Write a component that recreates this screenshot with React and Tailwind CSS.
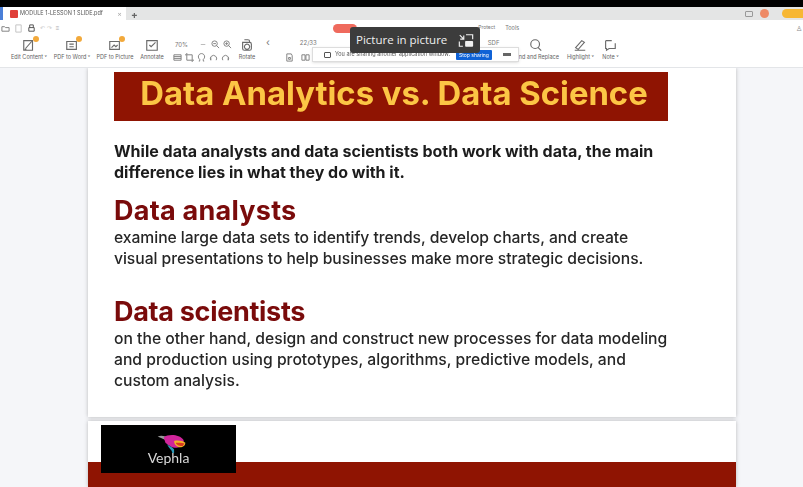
const F = { fontFamily: '"Inter","Liberation Sans",sans-serif' };

function Tool({ label, w, children }) {
  return (
    <div className="flex flex-col items-center gap-[1px] pt-[2px]" style={{ width: w }}>
      {children}
      <span className="text-[5.500px] leading-[8px] text-[#5f5f5f] whitespace-nowrap">{label}</span>
    </div>
  );
}

function Ic({ children, badge }) {
  return (
    <span className="relative block w-[14px] h-[14px]">
      <svg viewBox="0 0 16 16" className="w-[14px] h-[14px]" fill="none" stroke="#6a6a6a" strokeWidth="1.300">
        {children}
      </svg>
      {badge && <span className="absolute -top-[2px] -right-[3px] w-[6px] h-[6px] rounded-full bg-[#f2a93b]" />}
    </span>
  );
}

function Small({ d, c = "#858585" }) {
  return (
    <svg viewBox="0 0 10 10" className="w-[9px] h-[9px] shrink-0" fill="none" stroke={c} strokeWidth="1.100">
      <path d={d} />
    </svg>
  );
}

export default function App() {
  return (
    <div className="w-[803px] h-[487px] overflow-hidden relative bg-[#f5f6f9] flex flex-col" style={F}>
      <div className="h-[7px] bg-black shrink-0" />

      {/* tab bar */}
      <div className="h-[13px] bg-[#e4e5e5] shrink-0 flex items-center blur-[0.4px]">
        <div className="w-[3px] h-[13px] bg-[#4a7fd8]" />
        <div className="w-[123px] h-[13px] bg-white flex items-center pl-[7px] gap-[2px]">
          <span className="w-[8px] h-[8px] bg-[#e0403a] rounded-[1px]" />
          <span className="text-[5.500px] text-[#555] whitespace-nowrap">MODULE 1-LESSON 1 SLIDE.pdf</span>
          <span className="ml-auto mr-[4px] text-[7px] leading-none text-[#aaa]">×</span>
        </div>
        <span className="ml-[5px] text-[10px] leading-none text-[#666] font-bold">+</span>
        <div className="ml-auto flex items-center">
          <span className="w-[8px] h-[6px] border border-[#999] rounded-[1px] mr-[7px]" />
          <span className="w-[9px] h-[9px] rounded-full bg-[#ee8a66] mr-[13px]" />
          <span className="w-[21px] h-[9px] rounded-l-full bg-[#f7b733]" />
        </div>
      </div>

      {/* toolbar */}
      <div className="h-[47px] bg-white shrink-0 relative flex flex-col blur-[0.4px]">
        <div className="h-[16px] flex items-center pl-[1px] gap-[4px]">
          <Small d="M1 3h3l1 1h4v4H1z" />
          <Small d="M2 1h6v8H2z" c="#c4c4c4" />
          <Small d="M2 4h6v4H2zM3 4V1h4v3" c="#555555" />
          <span className="text-[6px] leading-none text-[#ccc]">↶ ↷</span>
          <span className="text-[6px] leading-none text-[#aaa]">≡</span>
          <div className="ml-[270px] mt-[1px] w-[24px] h-[9px] rounded-full bg-[#ef6a5d]" />
          <span className="ml-[117px] text-[5px] text-[#777]">Protect</span>
          <span className="ml-[6px] text-[5.500px] text-[#777]">Tools</span>
          <span className="ml-auto mr-[1px] text-[7px] leading-none text-[#888]">♙</span>
        </div>
        <div className="flex items-start pl-[6px]">
          <Tool label="Edit Content ˅" w={46}>
            <Ic badge><path d="M2 3h10v11H2zM4 12l7-8M3 13l2 0" /></Ic>
          </Tool>
          <Tool label="PDF to Word ˅" w={40}>
            <Ic badge><path d="M2 4h11v9H2zM5 7h5M5 10h5" /></Ic>
          </Tool>
          <Tool label="PDF to Picture" w={46}>
            <Ic badge><path d="M2 4h11v9H2zM4 11l3-3 2 2 2-2" /></Ic>
          </Tool>
          <Tool label="Annotate" w={28}>
            <Ic><path d="M2 3h12v11H2zM5 8l2 2 5-5" /></Ic>
          </Tool>

          <div className="ml-[9px] w-[62px] flex flex-col gap-[3px] pt-[3px]">
            <div className="flex items-center gap-[3px] h-[11px]">
              <span className="text-[6px] text-[#777] w-[21px]">70%</span>
              <Small d="M2 5h5" c="#bbbbbb" />
              <Small d="M1 4a3 3 0 1 0 6 0a3 3 0 1 0-6 0M6 6l3 3M2.500 4h3" />
              <Small d="M1 4a3 3 0 1 0 6 0a3 3 0 1 0-6 0M6 6l3 3M4 2.500v3M2.500 4h3" />
            </div>
            <div className="flex items-center gap-[3px] -ml-[2px]">
              <Small d="M1 2h8v6H1zM1 4h8M1 6h8" />
              <Small d="M2 2h6v6H2zM0 2h2M8 8h2M2 0v2M8 8v2" />
              <Small d="M2 9h1V7a3.500 3.500 0 1 1 4 0v2h1" />
              <Small d="M2 8a3.500 3.500 0 1 1 6 0M2 8V5" />
              <Small d="M8 8a3.500 3.500 0 1 0-6 0M8 8V5" />
            </div>
          </div>

          <Tool label="Rotate" w={20}>
            <Ic><path d="M5 2h4a2 2 0 0 1 2 2v1M3 5h8a2 2 0 0 1 2 2v5a2 2 0 0 1-2 2H5a2 2 0 0 1-2-2zM8 7a3 3 0 1 0 0.100 0" /></Ic>
          </Tool>

          <div className="ml-[7px] flex flex-col">
            <div className="flex h-[16px] items-start">
              <span className="ml-[2px] text-[10px] leading-[12px] text-[#777]">‹</span>
              <span className="ml-[30px] mt-[3px] text-[6px] leading-[8px] text-[#777]">22/33</span>
            </div>
            <div className="flex gap-[7px] ml-[21px] mt-[1px]">
              <Small d="M2 1h5l1 2v6H2zM4 5h2v2H4z" />
              <Small d="M1 2h3.500v6H1zM5.500 2H9v6H5.500z" />
            </div>
          </div>

          <span className="ml-[171px] mt-[3px] text-[6px] leading-[8px] text-[#777]">SDF</span>

          <div className="ml-[12px]">
            <Tool label="Find and Replace" w={50}>
              <Ic><path d="M2 7a5 5 0 1 0 10 0a5 5 0 1 0-10 0M10.500 11l3.500 3.500" /></Ic>
            </Tool>
          </div>
          <div className="ml-[1px]">
            <Tool label="Highlight ˅" w={36}>
              <Ic><path d="M3 11l7-8 3 2-7 8zM2 14h12" /></Ic>
            </Tool>
          </div>
          <div className="ml-[2px]">
            <Tool label="Note ˅" w={20}>
              <Ic><path d="M3 3h7M14 6v6H7l-3 2v-2H3V3" /></Ic>
            </Tool>
          </div>
        </div>

        {/* sharing bar */}
        <div className="absolute left-[312px] top-[27px] w-[207px] h-[15px] bg-white border border-[#ddd] flex items-center shadow-sm">
          <span className="ml-[11px] w-[7px] h-[6px] border border-[#555] rounded-[1px]" />
          <span className="ml-[4px] text-[5.500px] text-[#555] whitespace-nowrap">You are sharing another application window.</span>
          <span className="ml-[6px] w-[36px] h-[10px] bg-[#0f62d6] text-white text-[5px] leading-[10px] text-center rounded-[1px] whitespace-nowrap">Stop sharing</span>
          <span className="ml-[11px] w-[8px] h-[3px] bg-[#666]" />
        </div>
      </div>
      <div className="h-px bg-[#e3e5e8] shrink-0" />

      {/* Picture in picture tooltip */}
      <div className="absolute left-[350px] top-[27px] w-[130px] h-[26px] rounded-[3px] bg-[#3c3c3c] flex items-center pl-[6px] text-[#f0f0f0] z-10">
        <span className="text-[11.500px] leading-none whitespace-nowrap" style={{ fontFamily: '"Open Sans",sans-serif' }}>Picture in picture</span>
        <svg viewBox="0 0 18 16" className="ml-[11px] w-[16px] h-[15px]" fill="none" stroke="#f0f0f0" strokeWidth="1.300">
          <path d="M9 1.500h7.500v5M1.500 9v5.500h4M2 2l4.500 4.500M6.500 2.500v4h-4" />
          <rect x="8" y="8.500" width="9" height="6.500" rx="1" fill="#f0f0f0" stroke="none" />
        </svg>
      </div>

      {/* document */}
      <div className="flex-1 min-h-0 flex flex-col pl-[88px] gap-[4px] overflow-hidden">
        <div className="w-[648px] h-[349px] shrink-0 bg-white shadow-[0_0_4px_rgba(0,0,0,0.25)] pl-[26px] pt-[4px]">
          <div className="w-[554px] h-[49px] bg-[#8f1402] flex items-center justify-center pb-[8px] pl-[6px]">
            <span className="text-[32.800px] leading-[40px] font-bold text-[#fcc645] whitespace-nowrap blur-[0.3px]">Data Analytics vs. Data Science</span>
          </div>
          <p className="mt-[20px] text-[16px] leading-[21px] font-bold text-[#1c1c1c] whitespace-nowrap blur-[0.3px]">
            While data analysts and data scientists both work with data, the main<br />difference lies in what they do with it.
          </p>
          <h2 className="mt-[12px] text-[27px] leading-[32px] font-bold tracking-[0.25px] text-[#7a0b0b] blur-[0.3px]">Data analysts</h2>
          <p className="text-[15.700px] leading-[21px] font-medium tracking-[-0.05px] text-[#262626] whitespace-nowrap blur-[0.3px]">
            examine large data sets to identify trends, develop charts, and create<br />visual presentations to help businesses make more strategic decisions.
          </p>
          <h2 className="mt-[27px] text-[27px] leading-[32px] font-bold tracking-[-0.3px] text-[#7a0b0b] blur-[0.3px]">Data scientists</h2>
          <p className="text-[15.700px] leading-[21px] font-medium text-[#262626] whitespace-nowrap blur-[0.3px]">
            on the other hand, design and construct new processes for data modeling<br />and production using prototypes, algorithms, predictive models, and<br />custom analysis.
          </p>
        </div>

        <div className="w-[648px] flex-1 bg-white shadow-[0_0_4px_rgba(0,0,0,0.25)] relative flex flex-col justify-end">
          <div className="h-[25px] bg-[#8f1402]" />
          <div className="absolute left-[13px] top-[4px] w-[135px] h-[48px] bg-black flex flex-col items-center justify-center">
            <svg viewBox="0 0 34 22" className="w-[33px] h-[19px] ml-[6px] blur-[0.4px]">
              <path d="M1 3c5-2 8 0 12 1l-3 3z" fill="#9a9a9a" />
              <path d="M8 4c5-4 18-4 23 3c1 5-4 9-8 9c-6 0-9-3-13-6z" fill="#d0259b" />
              <path d="M20 8c5-1 10 0 13 2c0 4-4 6-8 5c-3-1-5-4-5-7z" fill="#f2b327" />
              <path d="M22 10c3 0 7 0 10 1l-2 3c-3 0-7-1-8-4z" fill="#d8391f" />
              <path d="M12 12c2 2 6 3 8 6l0 4h-2l-1-3c-2-2-4-4-5-7z" fill="#2a9ab8" />
            </svg>
            <span className="text-[14px] leading-[14px] text-[#d8d8d8] -mt-[2px] blur-[0.3px]" style={{ fontFamily: '"Lato",sans-serif' }}>Vephla</span>
          </div>
        </div>
      </div>
    </div>
  );
}
